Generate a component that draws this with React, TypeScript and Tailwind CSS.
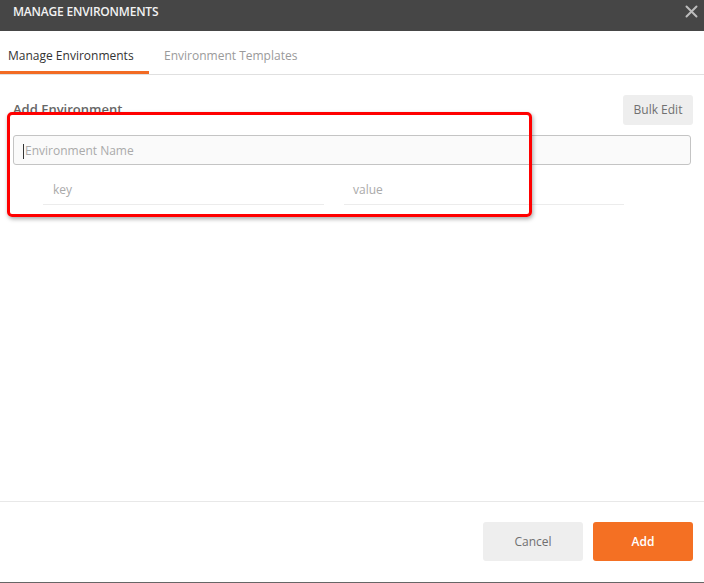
import React from "react";

const font = { fontFamily: '"Open Sans", "Liberation Sans", sans-serif' };

function Header() {
  return (
    <div className="h-[31px] bg-[#464646] flex items-start justify-between pl-[13px] pr-[6px] pt-[4px] shrink-0">
      <span className="text-[12px] font-semibold text-[#f2f2f2] tracking-[-0.2px] leading-[16px]">
        MANAGE ENVIRONMENTS
      </span>
      <svg width="13" height="13" viewBox="0 0 13 13" className="mt-[1px]">
        <path d="M1.5 1.5 L11.5 11.5 M11.5 1.5 L1.5 11.5" stroke="#bdbdbd" strokeWidth="2" strokeLinecap="round" />
      </svg>
    </div>
  );
}

function Tabs() {
  return (
    <div className="h-[44px] border-b border-[#e0e0e0] flex items-end shrink-0">
      <div className="w-[149px] h-full border-b-[3px] border-[#f26b24] flex items-center pl-[8px] pt-[10px] text-[12px] text-[#333]">
        Manage Environments
      </div>
      <div className="h-full flex items-center pl-[15px] pb-[3px] pt-[10px] text-[12px] text-[#9a9a9a]">
        Environment Templates
      </div>
    </div>
  );
}

function Body() {
  return (
    <div className="flex-1 px-[11px] pt-[20px] relative">
      <div className="flex items-center justify-between pl-[2px]">
        <span className="text-[13px] font-semibold text-[#666]">Add Environment</span>
        <button className="h-[30px] w-[70px] rounded-[3px] bg-[#eeeeee] text-[12px] text-[#707070]">
          Bulk Edit
        </button>
      </div>
      <div className="mt-[10px] mx-[2px] h-[30px] rounded-[3px] border border-[#c4c4c4] bg-[#fafafa] flex items-center pl-[9px] pt-[2px]">
        <span className="w-px h-[15px] bg-[#333] mr-[1px]" />
        <span className="text-[12px] text-[#aaa]">Environment Name</span>
      </div>
      <div className="flex gap-[20px] ml-[32px] mt-[9px]">
        <div className="w-[281px] h-[31px] border-b border-[#ececec] flex items-center pl-[10px] pt-[2px] text-[12px] text-[#aaa]">
          key
        </div>
        <div className="w-[280px] h-[31px] border-b border-[#ececec] flex items-center pl-[9px] pt-[2px] text-[12px] text-[#aaa]">
          value
        </div>
      </div>
      <div className="absolute left-[7px] top-[37px] w-[525px] h-[105px] border-[3px] border-[#f00] rounded-[5px] shadow-[1px_2px_4px_rgba(0,0,0,0.35)] pointer-events-none" />
    </div>
  );
}

function Footer() {
  return (
    <div className="h-[81px] border-t border-[#e8e8e8] flex items-start justify-end gap-[10px] pr-[11px] pt-[20px] shrink-0">
      <button className="w-[100px] h-[39px] rounded-[3px] bg-[#eeeeee] text-[12px] text-[#707070]">
        Cancel
      </button>
      <button className="w-[100px] h-[39px] rounded-[3px] bg-[#f47023] text-[12px] font-semibold text-white">
        Add
      </button>
    </div>
  );
}

export default function App() {
  return (
    <div style={font} className="w-[704px] h-[583px] flex flex-col bg-white overflow-hidden">
      <Header />
      <Tabs />
      <Body />
      <Footer />
      <div className="h-px bg-[#666] shrink-0" />
    </div>
  );
}
